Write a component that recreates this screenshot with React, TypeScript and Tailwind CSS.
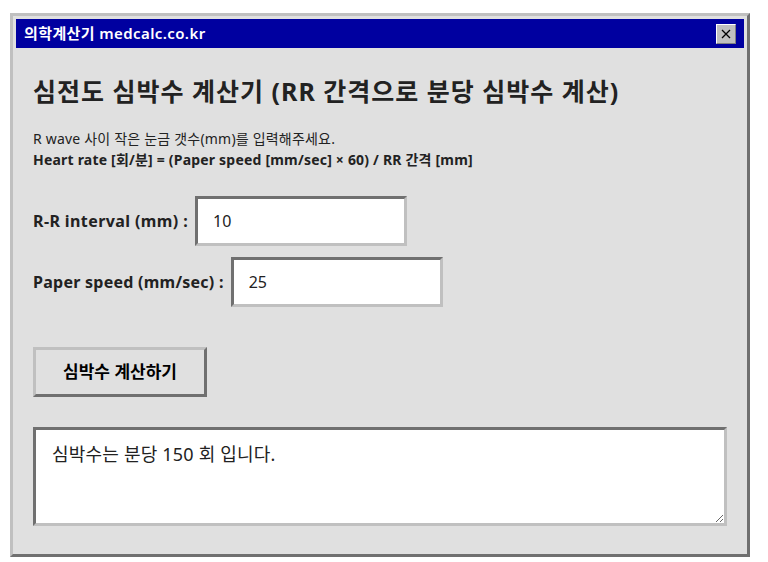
import React, { useState } from "react";

const font = { fontFamily: '"Noto Sans", "Noto Sans CJK KR", sans-serif' };

export default function App() {
  const [rr, setRr] = useState("10");
  const [speed, setSpeed] = useState("25");
  const [result, setResult] = useState("심박수는 분당 150 회 입니다.");

  const calc = () => {
    const r = parseFloat(rr);
    const s = parseFloat(speed);
    if (!r || !s) return;
    setResult(`심박수는 분당 ${Math.round((s * 60) / r)} 회 입니다.`);
  };

  return (
    <div className="min-h-screen bg-white pt-[13px] pl-[10px]" style={font}>
      {/* window */}
      <div className="w-[740px] border-[3px] border-t-[#c0c0c0] border-l-[#c0c0c0] border-r-[#707070] border-b-[#707070] bg-[#e0e0e0] p-[3px]">
        {/* title bar */}
        <div className="h-[29px] bg-[#0000a0] flex items-center justify-between pl-[8px] pr-[8px]">
          <span className="text-white text-[15px] font-semibold tracking-[0.4px]">의학계산기 medcalc.co.kr</span>
          <button className="w-[20px] h-[20px] bg-[#c0c0c0] border border-t-white border-l-white border-r-[#808080] border-b-[#808080] flex items-center justify-center">
            <svg width="10" height="10" viewBox="0 0 10 10">
              <path d="M1 1 L9 9 M9 1 L1 9" stroke="#000" strokeWidth="1.3" />
            </svg>
          </button>
        </div>

        {/* content */}
        <div className="px-[17px] pb-[25px] text-[#222]">
          <h1 className="mt-[26px] text-[25px] leading-[34px] font-bold tracking-[1px]">
            심전도 심박수 계산기 (RR 간격으로 분당 심박수 계산)
          </h1>
          <p className="mt-[20px] text-[14px] leading-[21px] tracking-[0.2px]">
            R wave 사이 작은 눈금 갯수(mm)를 입력해주세요.
          </p>
          <p className="text-[14px] leading-[21px] font-bold tracking-[0.2px]">
            Heart rate [회/분] = (Paper speed [mm/sec] × 60) / RR 간격 [mm]
          </p>

          <div className="mt-[26px] flex items-center gap-[7px]">
            <label className="text-[16px] font-bold tracking-[0.4px]">R-R interval (mm) :</label>
            <input
              value={rr}
              onChange={(e) => setRr(e.target.value)}
              className="w-[212px] h-[50px] bg-white border-[3px] border-t-[#707070] border-l-[#707070] border-r-[#c0c0c0] border-b-[#c0c0c0] px-[15px] text-[16px] outline-none"
            />
          </div>
          <div className="mt-[11px] flex items-center gap-[7px]">
            <label className="text-[16px] font-bold tracking-[0.25px]">Paper speed (mm/sec) :</label>
            <input
              value={speed}
              onChange={(e) => setSpeed(e.target.value)}
              className="w-[212px] h-[50px] bg-white border-[3px] border-t-[#707070] border-l-[#707070] border-r-[#c0c0c0] border-b-[#c0c0c0] px-[15px] text-[16px] outline-none"
            />
          </div>

          <button
            onClick={calc}
            className="mt-[40px] w-[174px] h-[50px] bg-[#e0e0e0] border-[3px] border-t-[#c0c0c0] border-l-[#c0c0c0] border-r-[#707070] border-b-[#707070] text-[17px] font-bold text-black"
          >
            심박수 계산하기
          </button>

          <textarea
            value={result}
            onChange={(e) => setResult(e.target.value)}
            className="mt-[30px] block w-[694px] h-[99px] bg-white border-[3px] border-t-[#707070] border-l-[#707070] border-r-[#c0c0c0] border-b-[#c0c0c0] px-[16px] pt-[11px] text-[18px] leading-[26px] tracking-[0.2px] outline-none"
          />
        </div>
      </div>
    </div>
  );
}
